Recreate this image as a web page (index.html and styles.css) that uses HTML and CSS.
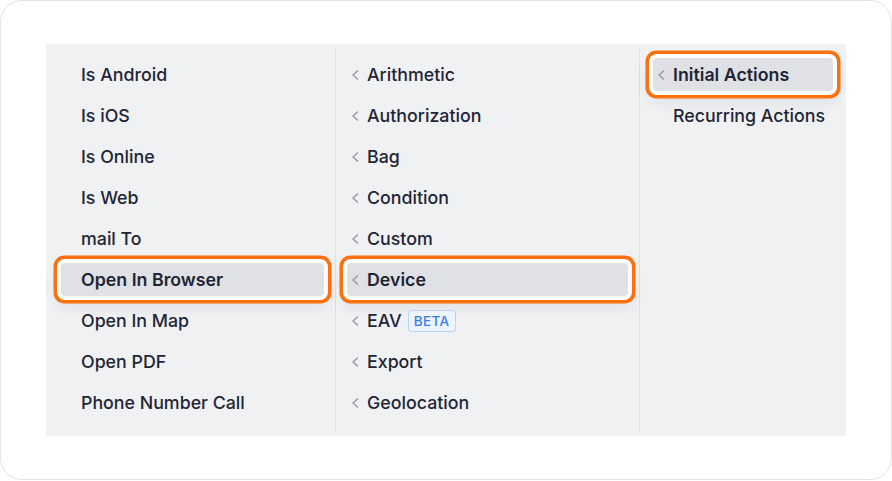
FILE: index.html
```html
<!DOCTYPE html>
<html lang="en">

<head>
    <meta charset="UTF-8">
    <meta name="viewport" content="width=device-width, initial-scale=1.0">
    <title>Action Menu</title>
    <link rel="stylesheet" href="styles.css">
</head>

<body>
    <div class="frame">
        <div class="menu">
            <!-- first column: device actions -->
            <ul class="col col-first">
                <li class="item"><span class="slot"></span>Is Android</li>
                <li class="item"><span class="slot"></span>Is iOS</li>
                <li class="item"><span class="slot"></span>Is Online</li>
                <li class="item"><span class="slot"></span>Is Web</li>
                <li class="item"><span class="slot"></span>mail To</li>
                <li class="item active"><span class="slot"></span>Open In Browser</li>
                <li class="item"><span class="slot"></span>Open In Map</li>
                <li class="item"><span class="slot"></span>Open PDF</li>
                <li class="item"><span class="slot"></span>Phone Number Call</li>
            </ul>

            <!-- second column: categories -->
            <ul class="col col-mid">
                <li class="item"><span class="slot"><svg viewBox="0 0 10 12"><path d="M6.5 2 2 6 6.5 10"/></svg></span>Arithmetic</li>
                <li class="item"><span class="slot"><svg viewBox="0 0 10 12"><path d="M6.5 2 2 6 6.5 10"/></svg></span>Authorization</li>
                <li class="item"><span class="slot"><svg viewBox="0 0 10 12"><path d="M6.5 2 2 6 6.5 10"/></svg></span>Bag</li>
                <li class="item"><span class="slot"><svg viewBox="0 0 10 12"><path d="M6.5 2 2 6 6.5 10"/></svg></span>Condition</li>
                <li class="item"><span class="slot"><svg viewBox="0 0 10 12"><path d="M6.5 2 2 6 6.5 10"/></svg></span>Custom</li>
                <li class="item active"><span class="slot"><svg viewBox="0 0 10 12"><path d="M6.5 2 2 6 6.5 10"/></svg></span>Device</li>
                <li class="item"><span class="slot"><svg viewBox="0 0 10 12"><path d="M6.5 2 2 6 6.5 10"/></svg></span>EAV<span class="badge">BETA</span></li>
                <li class="item"><span class="slot"><svg viewBox="0 0 10 12"><path d="M6.5 2 2 6 6.5 10"/></svg></span>Export</li>
                <li class="item"><span class="slot"><svg viewBox="0 0 10 12"><path d="M6.5 2 2 6 6.5 10"/></svg></span>Geolocation</li>
            </ul>

            <!-- third column: action groups -->
            <ul class="col col-last">
                <li class="item active"><span class="slot"><svg viewBox="0 0 10 12"><path d="M6.5 2 2 6 6.5 10"/></svg></span>Initial Actions</li>
                <li class="item"><span class="slot"></span>Recurring Actions</li>
            </ul>
        </div>
    </div>
</body>

</html>
```

FILE: styles.css
```css
* {
    box-sizing: border-box;
}

body {
    margin: 0;
    padding: 0;
    background-color: #ffffff;
    font-family: Inter, "Noto Sans", Arial, sans-serif;
}

.frame {
    width: 892px;
    height: 480px;
    border: 1.5px solid #e1e3e7;
    border-radius: 22px;
    padding: 43px 0 0 45px;
}

.menu {
    width: 800px;
    height: 392px;
    background-color: #f0f1f3;
    display: grid;
    grid-template-columns: 289px 304px 1fr;
    padding: 5px 0 5px;
}

.col {
    list-style: none;
    margin: 0;
    padding: 9px 11px 0;
    display: flex;
    flex-direction: column;
    gap: 8px;
}

.col-first {
    padding-left: 15px;
}

.col-mid,
.col-last {
    border-left: 1px solid #dcdee2;
}

.col-last {
    padding-left: 13px;
    padding-right: 13px;
}

.item {
    display: flex;
    align-items: center;
    height: 33px;
    padding-left: 4px;
    border-radius: 4px;
    font-size: 17.8px;
    font-weight: 500;
    color: #1f2535;
    white-space: nowrap;
}

.item.active {
    background-color: #e0e1e5;
    font-weight: 600;
    box-shadow: 0 0 0 4px #ffffff, 0 0 0 7.5px #fb7110, 0 8px 14px 4px rgba(20, 24, 40, 0.08);
}

.slot {
    width: 10px;
    height: 12px;
    margin-right: 6px;
    display: flex;
}

.slot svg {
    width: 10px;
    height: 12px;
    fill: none;
    stroke: #979ca5;
    stroke-width: 1.6;
    stroke-linecap: round;
    stroke-linejoin: round;
}

.badge {
    margin-left: 6px;
    padding: 2px 5px;
    border: 1px solid #b9d2fb;
    border-radius: 3px;
    background-color: #eef4fe;
    color: #3b7bea;
    font-size: 13.5px;
    font-weight: 500;
    letter-spacing: 0.4px;
    line-height: 16px;
}
```
